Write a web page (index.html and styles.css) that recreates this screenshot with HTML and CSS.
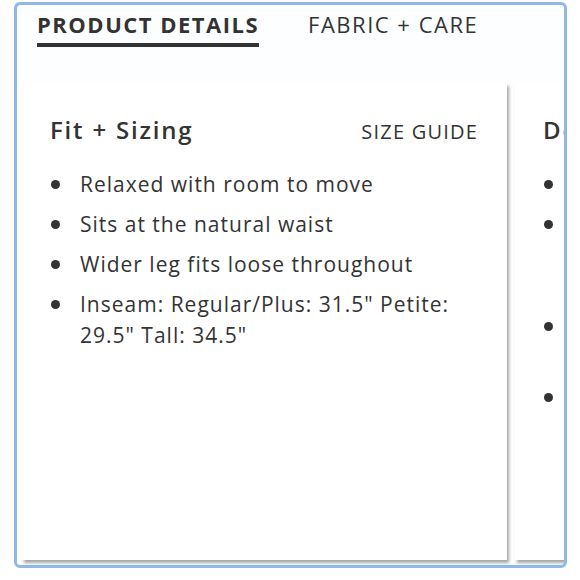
FILE: index.html
```html
<!DOCTYPE html>
<html>
  <head>
    <title>Product details</title>
    <link rel="stylesheet" href="styles.css">
  </head>
  <body>
    <div class="frame">
      <div class="tabs">
        <span class="tab active">PRODUCT DETAILS</span>
        <span class="tab">FABRIC + CARE</span>
      </div>
      <div class="cards">
        <div class="card">
          <div class="card-head">
            <h2>Fit + Sizing</h2>
            <span class="size-guide">SIZE GUIDE</span>
          </div>
          <ul class="points">
            <li>Relaxed with room to move</li>
            <li>Sits at the natural waist</li>
            <li>Wider leg fits loose throughout</li>
            <li>Inseam: Regular/Plus: 31.5" Petite: 29.5" Tall: 34.5"</li>
          </ul>
        </div>
        <div class="card">
          <div class="card-head">
            <h2>Details</h2>
          </div>
          <ul class="points">
            <li>Mid-weight denim</li>
            <li>Classic five-pocket styling<br>with zip fly and<br>button closure</li>
            <li>Raw hem at the<br>ankle</li>
            <li>Imported</li>
          </ul>
        </div>
      </div>
    </div>
  </body>
</html>
```

FILE: styles.css
```css
body {
  margin: 0;
  padding: 0;
  background-color: #fff;
  font-family: "Open Sans", Lato, sans-serif;
  color: #333;
}

.frame {
  box-sizing: border-box;
  margin: 2px 0 0 14px;
  width: 553px;
  height: 566px;
  border: 3px solid #8fb8e6;
  border-radius: 6px;
  background-color: #fdfeff;
  overflow: hidden;
}

.tabs {
  display: flex;
  gap: 49px;
  padding: 6px 0 0 20px;
}

.tab {
  font-size: 22px;
  line-height: 26px;
  letter-spacing: 1.5px;
  padding-bottom: 6px;
  border-bottom: 4px solid transparent;
}

.tab.active {
  font-weight: bold;
  border-bottom-color: #333;
}

.cards {
  display: flex;
  gap: 8px;
  margin-top: 36px;
  padding-left: 5px;
}

.card {
  box-sizing: border-box;
  flex-shrink: 0;
  width: 485px;
  height: 477px;
  padding: 32px 29px 0 28px;
  background-color: #fff;
  box-shadow: 2px 3px 3px rgba(0, 0, 0, 0.35);
}

.card-head {
  display: flex;
  justify-content: space-between;
  align-items: baseline;
}

.card-head h2 {
  margin: 0;
  font-size: 24px;
  line-height: 30px;
  font-weight: 600;
  letter-spacing: 1.8px;
}

.size-guide {
  font-size: 20px;
  letter-spacing: 1.2px;
}

.points {
  list-style: none;
  margin: 24px 0 0 0;
  padding: 0;
  display: flex;
  flex-direction: column;
  gap: 9px;
}

.points li {
  display: flex;
  font-size: 21px;
  line-height: 31px;
  letter-spacing: 1px;
}

.points li::before {
  content: "";
  flex-shrink: 0;
  width: 9px;
  height: 9px;
  margin: 11px 20px 0 1px;
  border-radius: 50%;
  background-color: #333;
}
```
